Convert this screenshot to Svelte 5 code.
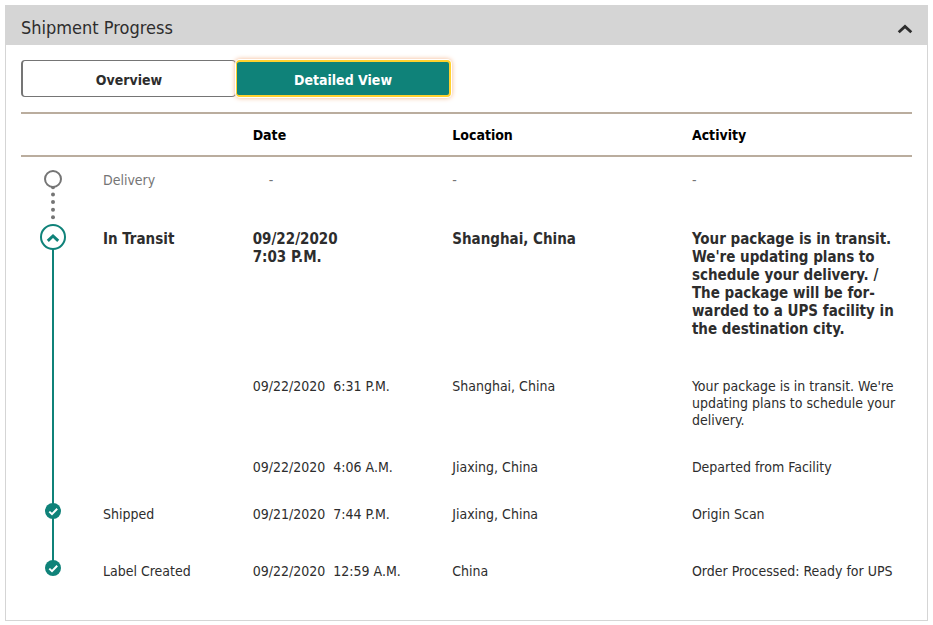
<script>
	let open = true;
	let expanded = true;
	let view = 'detailed';

	const steps = [
		{ status: 'Delivery', kind: 'pending', date: '\u00a0', time: '\u00a0-', location: '-', activity: '-' },
		{
			status: 'In Transit',
			kind: 'current',
			date: '09/22/2020',
			time: '7:03 P.M.',
			location: 'Shanghai, China',
			activity: "Your package is in transit. We're updating plans to schedule your delivery. / The package will be for\u00adwarded to a UPS facility in the destination city."
		},
		{
			status: '',
			kind: 'detail',
			date: '09/22/2020',
			time: '6:31 P.M.',
			location: 'Shanghai, China',
			activity: "Your package is in transit. We're updating plans to schedule your delivery."
		},
		{ status: '', kind: 'detail', date: '09/22/2020', time: '4:06 A.M.', location: 'Jiaxing, China', activity: 'Departed from Facility' },
		{ status: 'Shipped', kind: 'done', date: '09/21/2020', time: '7:44 P.M.', location: 'Jiaxing, China', activity: 'Origin Scan' },
		{ status: 'Label Created', kind: 'done last', date: '09/22/2020', time: '12:59 A.M.', location: 'China', activity: 'Order Processed: Ready for UPS' }
	];

	$: rows = steps.filter(s => {
		if (s.kind === 'detail') return view === 'detailed' && expanded;
		return true;
	});
</script>

<section class="card">
	<header>
		<h2>Shipment Progress</h2>
		<button class="collapse" aria-label="Toggle shipment progress" aria-expanded={open} on:click={() => (open = !open)}>
			<svg width="16" height="10" viewBox="0 0 16 10" class:flip={!open}>
				<path d="M1.7 8.3 8 2.4l6.3 5.9" fill="none" stroke="#2d2d2d" stroke-width="2.8" />
			</svg>
		</button>
	</header>

	{#if open}
		<div class="body">
			<div class="tabs">
				<button class:active={view === 'overview'} on:click={() => (view = 'overview')}>Overview</button>
				<button class:active={view === 'detailed'} on:click={() => (view = 'detailed')}>Detailed View</button>
			</div>

			<table>
				<colgroup>
					<col class="c-marker" />
					<col class="c-status" />
					<col class="c-date" />
					<col class="c-location" />
					<col class="c-activity" />
				</colgroup>
				<thead>
					<tr>
						<td></td>
						<td></td>
						<th scope="col">Date</th>
						<th scope="col">Location</th>
						<th scope="col">Activity</th>
					</tr>
				</thead>
				<tbody>
					{#each rows as row}
						<tr class={row.kind}>
							<td class="marker">
								{#if row.kind === 'pending'}
									<svg width="18" height="45" viewBox="0 0 18 45">
										<g fill="#757575">
											<circle cx="9" cy="17.2" r="2" />
											<circle cx="9" cy="24.5" r="2" />
											<circle cx="9" cy="32" r="2" />
											<circle cx="9" cy="39.7" r="2" />
											<circle cx="9" cy="47.3" r="2" />
										</g>
										<circle cx="9" cy="9" r="8" fill="#fff" stroke="#757575" stroke-width="2" />
									</svg>
								{:else if row.kind === 'current'}
									<button class="expand" aria-label="Toggle transit details" aria-expanded={expanded} on:click={() => (expanded = !expanded)}>
										<svg width="26" height="26" viewBox="0 0 26 26" class:flip={!expanded}>
											<circle cx="13" cy="13" r="12" fill="#fff" stroke="#0f8279" stroke-width="2" />
											<path d="M7.8 16.8 13 12l5.2 4.8" fill="none" stroke="#0f8279" stroke-width="3" />
										</svg>
									</button>
								{:else if row.kind !== 'detail'}
									<svg width="16" height="16" viewBox="0 0 16 16">
										<circle cx="8" cy="8" r="8" fill="#0f8279" />
										<path d="M4.3 8.6 7 11.2l5.2-5.4" fill="none" stroke="#fff" stroke-width="2" />
									</svg>
								{/if}
							</td>
							<td>{row.status}</td>
							<td><span class="date">{row.date}</span>{'\u00a0 '}<span class="time">{row.time}</span></td>
							<td>{row.location}</td>
							<td class="activity">{row.activity}</td>
						</tr>
					{/each}
				</tbody>
			</table>
		</div>
	{/if}
</section>

<style>
	.card {
		margin: 5px;
		border: 1px solid #d5d5d5;
		background: #fff;
		color: #2d2d2d;
		font-family: Tahoma, 'DejaVu Sans Condensed', 'Noto Sans', sans-serif;
		font-size: 14px;
		line-height: 17px;
	}

	header {
		display: flex;
		align-items: center;
		justify-content: space-between;
		padding: 0 14px 0 15px;
		height: 39px;
		background: #d5d5d5;
	}

	h2 {
		margin: 4px 0 0;
		font-size: 18px;
		line-height: 22px;
		font-weight: normal;
	}

	button {
		font: inherit;
		color: inherit;
		cursor: pointer;
	}

	svg {
		display: block;
		overflow: visible;
	}

	.flip {
		transform: rotate(180deg);
	}

	.collapse {
		margin-top: 6px;
		padding: 0;
		border: none;
		background: none;
	}

	.body {
		padding: 15px;
	}

	.tabs {
		display: flex;
		width: 430px;
		max-width: 100%;
	}

	.tabs button {
		flex: 1;
		height: 37px;
		padding: 3px 0 0;
		border: 1px solid #757575;
		border-left-width: 2px;
		border-radius: 4px;
		background: #fff;
		font-weight: bold;
	}

	.tabs .active {
		border: 2px solid #ffd12f;
		border-left-width: 1px;
		background: #0f8279;
		color: #fff;
		box-shadow: 0 0 0 1px #fff, 0 0 5px 1px #f3b78f;
	}

	table {
		width: 100%;
		margin-top: 15px;
		border-collapse: separate;
		border-spacing: 0;
		table-layout: fixed;
	}

	.c-marker { width: 9.2%; }
	.c-status { width: 16.8%; }
	.c-date { width: 22.4%; }
	.c-location { width: 26.9%; }
	.c-activity { width: 24.7%; }

	td, th {
		padding: 15px 0 25px;
		text-align: left;
		vertical-align: top;
	}

	thead td, thead th {
		padding: 13px 0 11px;
		border-top: 2px solid #baad9e;
		border-bottom: 2px solid #baad9e;
		color: #000;
	}

	.detail td {
		padding-bottom: 15px;
	}

	.current td {
		font-size: 15px;
		line-height: 18px;
		font-weight: bold;
	}

	.current .time {
		display: block;
	}

	.pending {
		color: #757575;
	}

	.activity {
		padding-right: 16px;
		hyphens: manual;
	}

	/* the teal line joining the steps */
	tbody .marker {
		padding: 12px 0 0 24px;
		background: linear-gradient(#0f8279, #0f8279) 31px 0 / 2px 100% no-repeat;
	}

	.pending .marker {
		padding: 13px 0 0 23px;
		background: none;
	}

	.current .marker {
		padding: 9px 0 0 19px;
		background-position: 31px 22px;
	}

	.last .marker {
		background-size: 2px 20px;
	}

	.expand {
		display: block;
		padding: 0;
		border: none;
		border-radius: 50%;
		background: none;
	}
</style>
